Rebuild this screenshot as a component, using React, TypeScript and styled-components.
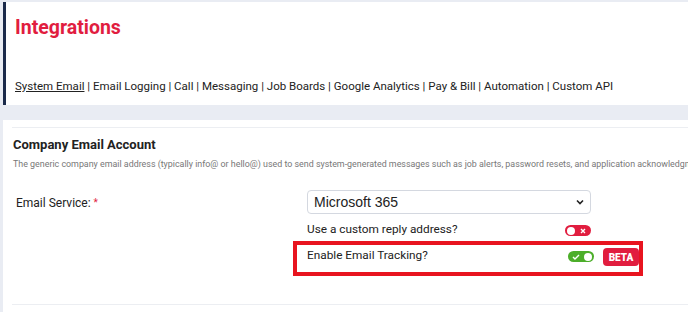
import React from 'react';
import styled, { createGlobalStyle } from 'styled-components';

const GlobalStyle = createGlobalStyle`
  html, body {
    margin: 0;
    padding: 0;
    background: #e9ecf3;
    font-family: Roboto, 'Liberation Sans', sans-serif;
    color: #222;
  }
`;

const Page = styled.div`
  width: 688px;
  height: 312px;
  overflow: hidden;
  padding-top: 2px;
  box-sizing: border-box;
`;

const HeaderCard = styled.header`
  margin-left: 3px;
  height: 103px;
  background: #fff;
  border-left: 3px solid #1b2a4a;
  padding: 14px 0 0 9px;
  box-sizing: border-box;
`;

const Title = styled.h1`
  margin: 0;
  font-size: 19.5px;
  font-weight: 700;
  color: #e11d3f;
  line-height: 24px;
`;

const Nav = styled.nav`
  margin-top: 37px;
  font-size: 11.5px;
  line-height: 18px;
  color: #222;
  white-space: nowrap;
`;

const NavLink = styled.a<{ $active?: boolean }>`
  color: inherit;
  text-decoration: ${(p) => (p.$active ? 'underline' : 'none')};
`;

const Section = styled.section`
  margin: 15px 0 0 3px;
  background: #fff;
  height: 200px;
  padding: 7px 0 0 9px;
  box-sizing: border-box;
`;

const Rule = styled.hr`
  margin: 0;
  border: 0;
  border-top: 1px solid #eceef2;
`;

const SectionTitle = styled.h2`
  margin: 8px 0 0 1px;
  font-size: 13px;
  font-weight: 700;
  line-height: 18px;
  color: #222;
`;

const Desc = styled.p`
  margin: 3px 0 0 1px;
  font-size: 8.9px;
  line-height: 14px;
  color: #777;
  white-space: nowrap;
`;

const FormRow = styled.div`
  display: grid;
  grid-template-columns: 295px 1fr;
  margin-top: 19px;
`;

const Label = styled.label`
  padding: 4px 0 0 4px;
  font-size: 12px;
  line-height: 18px;
`;

const Required = styled.span`
  color: #e11d3f;
  font-size: 10px;
  vertical-align: top;
`;

const Fields = styled.div`
  display: flex;
  flex-direction: column;
`;

const Select = styled.div`
  width: 284px;
  height: 24px;
  box-sizing: border-box;
  border: 1px solid #d4d8e0;
  border-radius: 4px;
  display: flex;
  align-items: center;
  justify-content: space-between;
  padding: 0 6px 0 6px;
  font-family: 'Liberation Sans', Arial, sans-serif;
  font-size: 14px;
`;

const Option = styled.div`
  display: flex;
  align-items: flex-start;
  width: 284px;
  padding-top: 7px;
`;

const BoxedOption = styled(Option)`
  width: 350px;
  height: 35px;
  margin: 4px 0 0 -14px;
  padding: 2px 0 0 10px;
  border: 4px solid #e8141f;
  box-sizing: border-box;
`;

const OptionText = styled.span`
  flex: 1;
  font-size: 11.8px;
  line-height: 16px;
`;

const Toggle = styled.span<{ $on?: boolean }>`
  position: relative;
  display: inline-flex;
  align-items: center;
  width: 26px;
  height: 11px;
  margin-top: 4px;
  border-radius: 6px;
  background: ${(p) => (p.$on ? '#4cae2a' : '#e11d3f')};
  flex-shrink: 0;
`;

const Knob = styled.span<{ $on?: boolean }>`
  position: absolute;
  top: 1.5px;
  ${(p) => (p.$on ? 'right: 2px;' : 'left: 2px;')}
  width: 8px;
  height: 8px;
  border-radius: 50%;
  background: #fff;
`;

const Mark = styled.span<{ $on?: boolean }>`
  position: absolute;
  top: 0;
  ${(p) => (p.$on ? 'left: 4px;' : 'right: 5px;')}
  height: 11px;
  display: flex;
  align-items: center;
`;

const Badge = styled.span`
  margin: 1px 0 0 9px;
  width: 36px;
  height: 18px;
  border-radius: 4px;
  background: #e11d3f;
  color: #fff;
  font-family: Roboto, 'Liberation Sans', sans-serif;
  font-size: 10px;
  font-weight: 900;
  display: flex;
  align-items: center;
  justify-content: center;
`;

const BottomRule = styled(Rule)`
  margin-top: 28px;
`;

const Switch = ({ on }: { on?: boolean }) => (
  <Toggle $on={on}>
    <Knob $on={on} />
    <Mark $on={on}>
      {on ? (
        <svg width="8" height="6" viewBox="0 0 8 6">
          <path d="M1 3l2 2 4-4" stroke="#fff" strokeWidth="1.4" fill="none" />
        </svg>
      ) : (
        <svg width="6" height="6" viewBox="0 0 6 6">
          <path d="M1 1l4 4M5 1L1 5" stroke="#fff" strokeWidth="1.4" fill="none" />
        </svg>
      )}
    </Mark>
  </Toggle>
);

const links = [
  'System Email',
  'Email Logging',
  'Call',
  'Messaging',
  'Job Boards',
  'Google Analytics',
  'Pay & Bill',
  'Automation',
  'Custom API',
];

const App = () => (
  <Page>
    <GlobalStyle />
    <HeaderCard>
      <Title>Integrations</Title>
      <Nav>
        {links.map((l, i) => (
          <React.Fragment key={l}>
            {i > 0 && ' | '}
            <NavLink $active={i === 0}>{l}</NavLink>
          </React.Fragment>
        ))}
      </Nav>
    </HeaderCard>
    <Section>
      <Rule />
      <SectionTitle>Company Email Account</SectionTitle>
      <Desc>
        The generic company email address (typically info@ or hello@) used to send system-generated messages such as job alerts, password resets, and application acknowledgments.
      </Desc>
      <FormRow>
        <Label>
          Email Service: <Required>*</Required>
        </Label>
        <Fields>
          <Select>
            <span>Microsoft 365</span>
            <svg width="8" height="6" viewBox="0 0 8 6">
              <path d="M1 1.5l3 3 3-3" stroke="#222" strokeWidth="1.6" fill="none" />
            </svg>
          </Select>
          <Option>
            <OptionText>Use a custom reply address?</OptionText>
            <Switch />
          </Option>
          <BoxedOption>
            <OptionText>Enable Email Tracking?</OptionText>
            <Switch on />
            <Badge>BETA</Badge>
          </BoxedOption>
        </Fields>
      </FormRow>
      <BottomRule />
    </Section>
  </Page>
);

export default App;
